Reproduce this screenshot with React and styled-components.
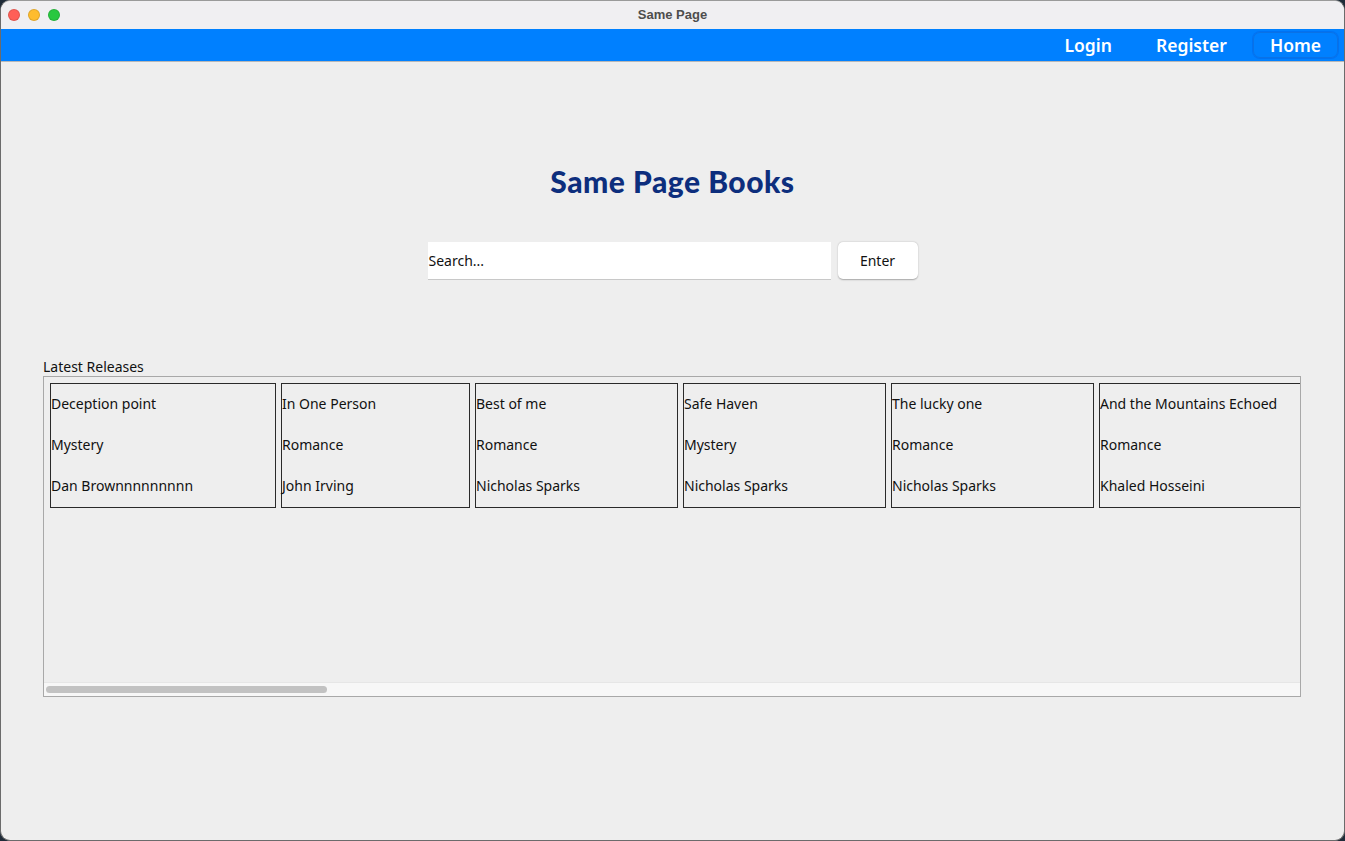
import React from "react";
import styled, { createGlobalStyle } from "styled-components";

const Global = createGlobalStyle`
  html, body { margin: 0; padding: 0; background: #1f2b38; }
  body { width: 1345px; height: 841px; overflow: hidden; font-family: "Noto Sans", "DejaVu Sans", sans-serif; }
  * { box-sizing: border-box; }
`;

const Window = styled.div`
  width: 1345px;
  height: 841px;
  border-radius: 10px;
  overflow: hidden;
  background: #eeeeee;
  display: flex;
  flex-direction: column;
  border: 1px solid #6b6b6b;
  border-top-color: #9a9a9a;
`;

const TitleBar = styled.div`
  height: 28px;
  flex: none;
  background: #f0eff2;
  display: flex;
  align-items: center;
  position: relative;
  padding-left: 7px;
  gap: 8px;
`;

const Light = styled.span`
  width: 12px;
  height: 12px;
  border-radius: 50%;
  background: ${(p) => p.$c};
  border: 0.5px solid rgba(0,0,0,0.12);
`;

const WinTitle = styled.div`
  position: absolute;
  left: 0;
  right: 0;
  top: 0;
  height: 28px;
  line-height: 28px;
  text-align: center;
  font-family: "Liberation Sans", sans-serif;
  font-weight: bold;
  font-size: 13px;
  color: #4d4d4d;
  pointer-events: none;
`;

const NavBar = styled.div`
  height: 33px;
  flex: none;
  background: #0080ff;
  border-bottom: 1px solid #b7b7b7;
  display: flex;
  justify-content: flex-end;
  align-items: center;
  padding-right: 6px;
`;

const NavItem = styled.div`
  font-family: "Noto Sans", sans-serif;
  font-weight: 600;
  font-size: 17.5px;
  color: #ffffff;
  padding: 0 ${(p) => (p.$active ? "16px" : "21px")};
  height: 26px;
  display: flex;
  align-items: center;
  border-radius: 7px;
  margin-left: ${(p) => (p.$active ? "4px" : "0")};
  border: ${(p) => (p.$active ? "1px solid #0a72e6" : "1px solid transparent")};
  box-shadow: ${(p) => (p.$active ? "0 0 0 1px rgba(0,90,220,0.35)" : "none")};
`;

const Main = styled.div`
  flex: 1;
  display: flex;
  flex-direction: column;
  align-items: center;
`;

const Heading = styled.h1`
  margin: 101px 0 0;
  font-family: "Lato", sans-serif;
  font-weight: 900;
  font-size: 30px;
  letter-spacing: 0.5px;
  color: #0d2e7d;
  line-height: 36px;
`;

const SearchRow = styled.div`
  margin-top: 43px;
  display: flex;
  gap: 7px;
  align-items: flex-start;
`;

const SearchInput = styled.div`
  width: 403px;
  height: 38px;
  background: #ffffff;
  border-bottom: 1px solid #c8c8c8;
  display: flex;
  align-items: center;
  padding-left: 1px;
  font-size: 14px;
  color: #111;
`;

const EnterButton = styled.div`
  width: 80px;
  height: 37px;
  background: #ffffff;
  border-radius: 5px;
  box-shadow: 0 0.5px 1.5px rgba(0,0,0,0.3);
  display: flex;
  align-items: center;
  justify-content: center;
  font-size: 14px;
  color: #111;
`;

const Section = styled.div`
  margin-top: 79px;
  align-self: stretch;
  padding: 0 43px 0 42px;
`;

const Label = styled.div`
  font-size: 14px;
  color: #111;
  line-height: 16px;
  height: 17px;
`;

const ScrollPane = styled.div`
  height: 321px;
  border: 1px solid #a8a8a8;
  display: flex;
  flex-direction: column;
`;

const Viewport = styled.div`
  flex: 1;
  overflow: hidden;
  display: flex;
  gap: 5px;
  padding: 6px 0 0 6px;
  align-items: flex-start;
`;

const Card = styled.div`
  flex: none;
  width: ${(p) => p.$w}px;
  height: 125px;
  border: 1px solid #2a2a2a;
  display: flex;
  flex-direction: column;
  padding: 11px 0 0 0;
  gap: 23px;
  font-size: 14px;
  color: #111;
  line-height: 18px;
  white-space: nowrap;
`;

const ScrollTrack = styled.div`
  height: 14px;
  flex: none;
  background: #f7f7f7;
  border-top: 1px solid #e6e6e6;
  padding: 3px 0 0 2px;
`;

const Thumb = styled.div`
  width: 281px;
  height: 7px;
  border-radius: 4px;
  background: #c2c2c2;
`;

const books = [
  { t: "Deception point", g: "Mystery", a: "Dan Brownnnnnnnnn", w: 226 },
  { t: "In One Person", g: "Romance", a: "John Irving", w: 189 },
  { t: "Best of me", g: "Romance", a: "Nicholas Sparks", w: 203 },
  { t: "Safe Haven", g: "Mystery", a: "Nicholas Sparks", w: 203 },
  { t: "The lucky one", g: "Romance", a: "Nicholas Sparks", w: 203 },
  { t: "And the Mountains Echoed", g: "Romance", a: "Khaled Hosseini", w: 230 },
];

export default function App() {
  return (
    <>
      <Global />
      <Window>
        <TitleBar>
          <Light $c="#ff5f57" />
          <Light $c="#febc2e" />
          <Light $c="#28c840" />
          <WinTitle>Same Page</WinTitle>
        </TitleBar>
        <NavBar>
          <NavItem>Login</NavItem>
          <NavItem>Register</NavItem>
          <NavItem $active>Home</NavItem>
        </NavBar>
        <Main>
          <Heading>Same Page Books</Heading>
          <SearchRow>
            <SearchInput>Search...</SearchInput>
            <EnterButton>Enter</EnterButton>
          </SearchRow>
          <Section>
            <Label>Latest Releases</Label>
            <ScrollPane>
              <Viewport>
                {books.map((b) => (
                  <Card key={b.t} $w={b.w}>
                    <span>{b.t}</span>
                    <span>{b.g}</span>
                    <span>{b.a}</span>
                  </Card>
                ))}
              </Viewport>
              <ScrollTrack>
                <Thumb />
              </ScrollTrack>
            </ScrollPane>
          </Section>
        </Main>
      </Window>
    </>
  );
}
